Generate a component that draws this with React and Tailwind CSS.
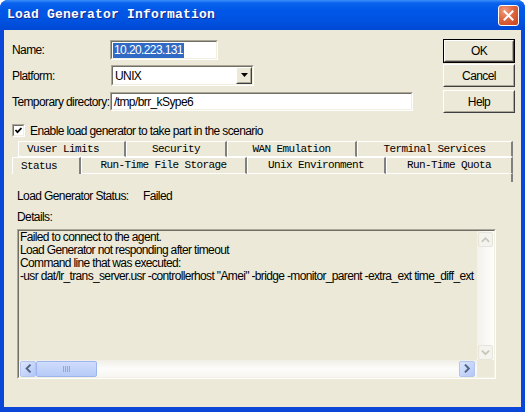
import React from 'react';

const sans = "font-['Liberation_Sans',Arial,sans-serif] text-[12px] tracking-[-0.6px] text-black";
const mono = "font-['Liberation_Mono','Courier_New',monospace]";

// classic 2px sunken edge (inputs, text area)
function Sunken({ className = '', inner = 'bg-white', children }) {
  return (
    <div className={`border border-t-[#ACA899] border-l-[#ACA899] border-r-white border-b-white ${className}`}>
      <div className={`w-full h-full border border-t-[#716F64] border-l-[#716F64] border-r-[#F1EFE2] border-b-[#F1EFE2] overflow-hidden ${inner}`}>
        {children}
      </div>
    </div>
  );
}

function RaisedButton({ children, className = '' }) {
  return (
    <div className={`border border-t-white border-l-white border-r-[#404040] border-b-[#404040] bg-[#ECE9D8] ${className}`}>
      <div className="w-full h-full flex items-center justify-center border border-transparent border-r-[#ACA899] border-b-[#ACA899]">
        {children}
      </div>
    </div>
  );
}

function Tab({ label, w, h, selected, left }) {
  return (
    <div
      style={{ width: w }}
      className={`${h} flex items-center ${left ? 'justify-start pl-[8px]' : 'justify-center'} border-t border-l border-t-white border-l-white border-r-2 border-r-[#808080] ${selected ? 'bg-[#ECE9D8]' : 'border-b border-b-white'} ${mono} text-[11px] tracking-[-0.6px] text-black`}
    >
      {label}
    </div>
  );
}

function Chevron({ dir, color }) {
  const d = {
    up: 'M4 9.5 L7.5 6 L11 9.5',
    down: 'M4 6 L7.5 9.5 L11 6',
    left: 'M9.5 4 L6 7.5 L9.5 11',
    right: 'M6 4 L9.5 7.5 L6 11',
  }[dir];
  return (
    <svg width="15" height="15" viewBox="0 0 15 15">
      <path d={d} fill="none" stroke={color} strokeWidth="2" strokeLinecap="square" />
    </svg>
  );
}

function DisabledArrow({ dir }) {
  return (
    <div className="w-[15px] h-[15px] mx-auto rounded-[2px] border border-[#E6E4DB] bg-[#F4F3EE] flex items-center justify-center">
      <Chevron dir={dir} color="#C9C7BA" />
    </div>
  );
}

function BlueArrow({ dir }) {
  return (
    <div className="w-[16px] h-[16px] rounded-[2px] border border-[#B2C5F1] bg-gradient-to-br from-[#DCE6FC] to-[#B3C6F5] flex items-center justify-center">
      <Chevron dir={dir} color="#4D6185" />
    </div>
  );
}

export default function App() {
  return (
    <div className="w-[525px] h-[412px] bg-white">
      <div className="w-full h-full flex flex-col rounded-t-[8px] bg-[#0A46D8] overflow-hidden">
        {/* title bar */}
        <div className="h-[30px] shrink-0 flex items-center pl-[7px] pr-[6px] bg-[linear-gradient(to_bottom,#3D8FF8_0px,#0A62EF_3px,#0058E8_10px,#0053E1_20px,#0048D3_30px)]">
          <span className={`${mono} text-[13px] tracking-[0.2px] font-bold text-white [text-shadow:1px_1px_0_#0B2A8C]`}>
            Load Generator Information
          </span>
          <div className="ml-auto w-[21px] h-[21px] rounded-[3px] border border-white bg-[radial-gradient(circle_at_30%_25%,#F19B7C_0%,#DE6641_45%,#C8411C_100%)] flex items-center justify-center">
            <svg width="11" height="11" viewBox="0 0 11 11">
              <path d="M1.5 1.5 L9.5 9.5 M9.5 1.5 L1.5 9.5" stroke="white" strokeWidth="2" strokeLinecap="square" />
            </svg>
          </div>
        </div>

        {/* client area */}
        <div className={`flex-1 mx-[4px] mb-[5px] bg-[#ECE9D8] pt-[9px] pl-[8px] pr-[6px] flex flex-col ${sans}`}>
          <div className="flex">
            <div className="flex flex-col pt-[1px]">
              <div className="flex items-center h-[20px]">
                <span className="w-[98px]">Name:</span>
                <Sunken className="w-[108px] h-[20px]">
                  <div className="h-full flex items-center pl-[1px]">
                    <span className="bg-[#316AC5] text-white px-[1px] leading-[15px]">10.20.223.131</span>
                  </div>
                </Sunken>
              </div>
              <div className="flex items-center h-[21px] mt-[5px]">
                <span className="w-[99px]">Platform:</span>
                <Sunken className="w-[143px] h-[21px]">
                  <div className="h-full flex items-center pl-[2px]">
                    <span>UNIX</span>
                    <RaisedButton className="ml-auto w-[16px] h-[17px]">
                      <svg width="7" height="5" viewBox="0 0 7 5">
                        <path d="M0 0 H7 L3.5 4 Z" fill="black" />
                      </svg>
                    </RaisedButton>
                  </div>
                </Sunken>
              </div>
              <div className="flex items-center h-[19px] mt-[6px]">
                <span className="w-[98px] whitespace-nowrap">Temporary directory:</span>
                <Sunken className="w-[303px] h-[19px]">
                  <div className="h-full flex items-center pl-[2px]">/tmp/brr_kSype6</div>
                </Sunken>
              </div>
              <div className="flex items-center h-[13px] mt-[13px]">
                <Sunken className="w-[13px] h-[13px]">
                  <svg width="11" height="11" viewBox="0 0 11 11" className="-ml-[1px] -mt-[1px]">
                    <path d="M2.5 5 L4.5 7.2 L8.5 3" fill="none" stroke="black" strokeWidth="1.8" />
                  </svg>
                </Sunken>
                <span className="ml-[5px] whitespace-nowrap">Enable load generator to take part in the scenario</span>
              </div>
            </div>

            <div className="ml-auto flex flex-col">
              <div className="border border-black">
                <RaisedButton className="w-[70px] h-[22px]">OK</RaisedButton>
              </div>
              <RaisedButton className="w-[72px] h-[23px] mt-[1px]">Cancel</RaisedButton>
              <RaisedButton className="w-[72px] h-[23px] mt-[3px]">Help</RaisedButton>
            </div>
          </div>

          {/* tabs */}
          <div className="mt-[4px] mr-[2px] flex flex-col">
            <div className="flex ml-[6px]">
              <Tab label="Vuser Limits" w={108} h="h-[16px]" left />
              <Tab label="Security" w={101} h="h-[16px]" />
              <Tab label="WAN Emulation" w={130} h="h-[16px]" />
              <Tab label="Terminal Services" w={156} h="h-[16px]" />
            </div>
            <div className="flex">
              <Tab label="Status" w={69} h="h-[17px]" selected left />
              <Tab label="Run-Time File Storage" w={166} h="h-[17px]" />
              <Tab label="Unix Environment" w={139} h="h-[17px]" />
              <Tab label="Run-Time Quota" w={127} h="h-[17px]" />
            </div>
            <div className="flex justify-end">
              <div className="w-[2px] h-[8px] bg-[#808080]" />
            </div>
          </div>

          {/* status panel */}
          <div className="pl-[5px] pt-[7px] flex flex-col">
            <div className="flex items-center h-[14px]">
              <span className="w-[126px]">Load Generator Status:</span>
              <span>Failed</span>
            </div>
            <div className="flex items-center h-[14px] mt-[7px]">Details:</div>
            <Sunken className="mt-[5px] w-[479px] h-[150px]" inner="bg-[#ECE9D8]">
              <div className="w-full h-full grid grid-cols-[1fr_17px] grid-rows-[1fr_17px]">
                <div className="pl-[1px] leading-[13px] tracking-[-0.65px] whitespace-nowrap overflow-hidden">
                  <div>Failed to connect to the agent.</div>
                  <div>Load Generator not responding after timeout</div>
                  <div>Command line that was executed:</div>
                  <div>-usr dat/lr_trans_server.usr -controllerhost "Amei" -bridge -monitor_parent -extra_ext time_diff_ext</div>
                </div>
                <div className="flex flex-col justify-between pt-[1px] bg-gradient-to-r from-[#F3F1EC] to-[#FEFEFB]">
                  <DisabledArrow dir="up" />
                  <DisabledArrow dir="down" />
                </div>
                <div className="flex items-center pl-[1px] pr-[2px] bg-gradient-to-b from-[#F0EEE6] via-[#FCFCFA] to-[#F7F6F2]">
                  <BlueArrow dir="left" />
                  <div className="w-[61px] h-[16px] rounded-[2px] border border-[#9CB5EF] bg-gradient-to-b from-[#CFDDFC] to-[#B6CAF7] flex items-center justify-center gap-[1px]">
                    <div className="w-[1px] h-[6px] bg-[#8DA7E6]" />
                    <div className="w-[1px] h-[6px] bg-[#8DA7E6]" />
                    <div className="w-[1px] h-[6px] bg-[#8DA7E6]" />
                    <div className="w-[1px] h-[6px] bg-[#8DA7E6]" />
                  </div>
                  <div className="ml-auto">
                    <BlueArrow dir="right" />
                  </div>
                </div>
                <div className="bg-[#ECE9D8]" />
              </div>
            </Sunken>
          </div>
        </div>
      </div>
    </div>
  );
}
